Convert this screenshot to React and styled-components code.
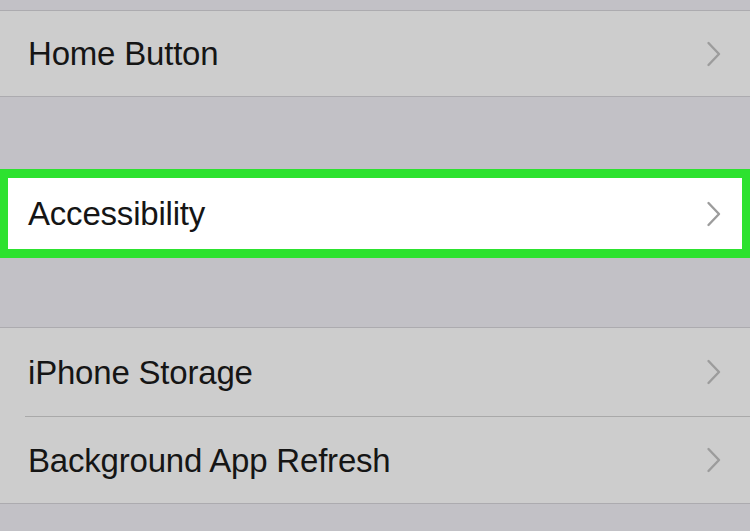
import React from "react";
import styled, { createGlobalStyle } from "styled-components";

const Global = createGlobalStyle`
  html, body { margin: 0; padding: 0; }
  body { font-family: "Liberation Sans", Arial, sans-serif; background: #c2c1c6; }
`;

const Page = styled.div`
  width: 750px;
  height: 531px;
  overflow: hidden;
  background: #c2c1c6;
  display: flex;
  flex-direction: column;
`;

const Gap = styled.div`
  height: ${(p) => p.$h}px;
  flex: none;
`;

const Group = styled.div`
  flex: none;
  background: #cdcdcd;
  border-top: 1px solid #acabaf;
  border-bottom: 1px solid #acabaf;
  display: flex;
  flex-direction: column;
`;

const Separator = styled.div`
  height: 1px;
  margin-left: 25px;
  background: #a9a9a9;
`;

const Row = styled.div`
  height: ${(p) => p.$h}px;
  display: flex;
  align-items: center;
  justify-content: space-between;
  padding: 0 28px 0 28px;
  box-sizing: border-box;
`;

const Highlight = styled.div`
  flex: none;
  height: 89px;
  box-sizing: border-box;
  border-style: solid;
  border-color: #2de22f;
  border-width: 9px 8px;
  background: #ffffff;
  display: flex;
  align-items: center;
  justify-content: space-between;
  padding: 0 20px;
`;

const Label = styled.span`
  font-size: 33px;
  line-height: 1;
  color: #151515;
  letter-spacing: -0.2px;
`;

const Chevron = () => (
  <svg width="16" height="26" viewBox="0 0 16 26">
    <path d="M2.5 2 L13 13 L2.5 24" fill="none" stroke="#9c9c9c" strokeWidth="2.4" strokeLinecap="round" strokeLinejoin="round" />
  </svg>
);

export default function App() {
  return (
    <>
      <Global />
      <Page>
        <Gap $h={10} />
        <Group>
          <Row $h={85}>
            <Label>Home Button</Label>
            <Chevron />
          </Row>
        </Group>
        <Gap $h={72} />
        <Highlight>
          <Label>Accessibility</Label>
          <Chevron />
        </Highlight>
        <Gap $h={69} />
        <Group>
          <Row $h={88}>
            <Label>iPhone Storage</Label>
            <Chevron />
          </Row>
          <Separator />
          <Row $h={86}>
            <Label>Background App Refresh</Label>
            <Chevron />
          </Row>
        </Group>
      </Page>
    </>
  );
}
